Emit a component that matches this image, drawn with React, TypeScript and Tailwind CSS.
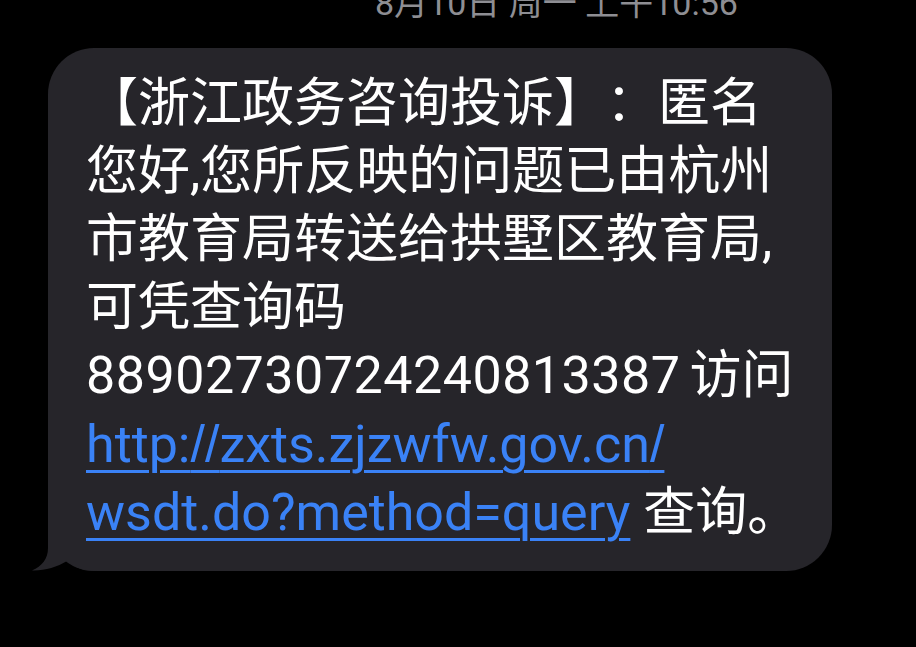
import React from 'react'

function Tail() {
  return (
    <svg
      className="absolute left-[-16px] bottom-0 w-[70px] h-[50px]"
      viewBox="0 0 70 50"
      fill="#26252a"
    >
      <path d="M16 0 L16 27 C16 38 10 45 0 49.5 C12 50 25 46 35 40 C42 46 50 50 66 50 L70 50 L70 0 Z" />
    </svg>
  )
}

// the reference slashes are narrow and steep; Liberation Sans has that shape
const Slash = ({ n = 1 }: { n?: number }) => (
  <span className="font-['Liberation_Sans',sans-serif]">{'/'.repeat(n)}</span>
)

export default function App() {
  return (
    <div className="w-[916px] h-[647px] bg-black overflow-hidden font-['Roboto','Noto_Sans_CJK_SC',sans-serif]">
      <div className="h-[48px] pl-[375px] overflow-hidden">
        <div className="mt-[-14px] text-[34px] leading-none text-[#8e8e93] whitespace-nowrap">
          8月10日 周一 上午10:56
        </div>
      </div>

      <div className="relative ml-[48px] w-[784px] rounded-[46px] bg-[#26252a] pt-[22px] pb-[24px] pl-[38px] text-[52px] leading-[68px] text-white [text-spacing-trim:space-all]">
        <Tail />
        <div className="relative">
          <div className="whitespace-nowrap">【浙江政务咨询投诉】：匿名</div>
          <div className="whitespace-nowrap">您好,您所反映的问题已由杭州</div>
          <div className="whitespace-nowrap">市教育局转送给拱墅区教育局,</div>
          <div className="whitespace-nowrap">可凭查询码</div>
          <div className="whitespace-nowrap">
            <span className="tracking-[0.5px]">88902730724240813387</span>
            <span className="ml-[9px]">访问</span>
          </div>
          <div className="whitespace-nowrap">
            <span className="text-[#3a82f6] underline decoration-[3px] underline-offset-[8px]">
              http:<Slash n={2} />zxts.zjzwfw.gov.cn<Slash />
            </span>
          </div>
          <div className="whitespace-nowrap">
            <span className="text-[#3a82f6] underline decoration-[3px] underline-offset-[8px]">
              wsdt.do?method=query
            </span>{' '}
            查询。
          </div>
        </div>
      </div>
    </div>
  )
}
